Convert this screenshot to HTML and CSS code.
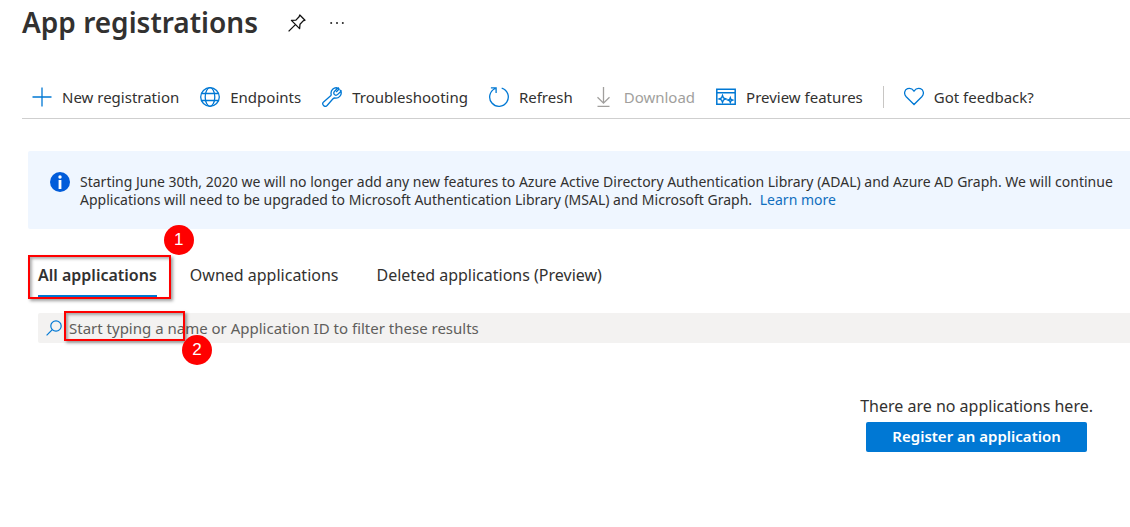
FILE: index.html
```html
<!DOCTYPE html>
<html lang="en">
<head>
<meta charset="utf-8">
<meta name="viewport" content="width=device-width, initial-scale=1">
<title>App registrations</title>
<link rel="stylesheet" href="styles.css">
</head>
<body>
<header class="page-header">
  <h1 class="page-title">App registrations</h1>
  <button class="icon-button" aria-label="Pin">
    <svg width="18" height="18" viewBox="0 0 18 18" fill="none" stroke="#111" stroke-width="1.3" stroke-linejoin="round"><path d="M11.8 1 17 6.2 15.2 6.9 12 10.2 11.600 14.600 3.400 6.400 7.900 6.100 11.1 2.8ZM7.400 10.600.6 17.400"/></svg>
  </button>
  <button class="icon-button" aria-label="More">
    <svg width="14" height="4" viewBox="0 0 14 4" fill="#222"><circle cx="1.2" cy="2" r="1"/><circle cx="7" cy="2" r="1"/><circle cx="12.8" cy="2" r="1"/></svg>
  </button>
</header>

<nav class="toolbar" aria-label="Commands">
  <button class="command"><svg class="icon" viewBox="0 0 20 20"><path d="M10 .5V19.500M.5 10H19.500"/></svg>New registration</button>
  <button class="command"><svg class="icon" viewBox="0 0 20 20"><circle cx="10" cy="10" r="9.300"/><ellipse cx="10" cy="10" rx="4.800" ry="9.300"/><path d="M1.500 6.500h17M1.500 13.500h17"/></svg>Endpoints</button>
  <button class="command"><svg class="icon" viewBox="0 0 20 20"><path d="M15.800 1A5.300 5.300 0 0 0 9.200 7.400C9.200 8.100 9 8.600 8.400 9.100L1.600 14.900A2.500 2.500 0 0 0 5.100 18.500L11 11.700C11.500 11.200 12 11 12.700 11A5.400 5.400 0 0 0 19 4.200L15.500 7.600A1.800 1.800 0 0 1 12.400 4.500Z"/><path d="M15.800 1C16.800 1.200 17.200 1.800 16.800 2.300L14.200 5M19 4.200C18.700 3.200 18 2.800 17.500 3.200"/></svg>Troubleshooting</button>
  <button class="command"><svg class="icon" viewBox="0 0 20 20"><path d="M12.700 1.100A9.300 9.300 0 1 1 6.200 1.500M1.900.8H7.100V5.900"/></svg>Refresh</button>
  <button class="command" disabled><svg class="icon" viewBox="0 0 20 20"><path d="M9.500 0V16M3.500 10.200 9.500 16.200 15.500 10.200M3.500 19.300H15.500"/></svg>Download</button>
  <button class="command"><svg class="icon" viewBox="0 0 20 20"><path stroke-width="1.500" d="M.8 2.300H19.200V17.200H.8ZM.8 5.800H19.200"/><path stroke-width="1.300" d="M6.500 8.300 7.500 10.900 10.100 11.900 7.500 12.900 6.500 15.500 5.500 12.900 2.900 11.900 5.500 10.900ZM14.300 10.600 15 12.400 16.800 13.100 15 13.800 14.300 15.600 13.600 13.800 11.800 13.100 13.600 12.400Z"/></svg>Preview features</button>
  <span class="divider"></span>
  <button class="command"><svg class="icon" viewBox="0 0 20 20"><path d="M10 17.500 2.200 9.700C-.5 6.800.4 2.800 3.500 1.700 6 .8 8.300 1.700 10 4.100 11.700 1.700 14 .8 16.500 1.700 19.600 2.800 20.500 6.800 17.800 9.700Z"/></svg>Got feedback?</button>
</nav>

<main class="content">
  <section class="notice">
    <svg class="notice-icon" viewBox="0 0 20 20"><circle cx="10" cy="10" r="10" fill="#015cda"/><circle cx="10" cy="5" r="1.700" fill="#fff"/><path d="M10 8V17" stroke="#fff" stroke-width="2.800"/></svg>
    <p class="notice-text">Starting June 30th, 2020 we will no longer add any new features to Azure Active Directory Authentication Library (ADAL) and Azure AD Graph. We will continue<br>Applications will need to be upgraded to Microsoft Authentication Library (MSAL) and Microsoft Graph. <a class="link" href="#">Learn more</a></p>
  </section>

  <div class="tabs" role="tablist">
    <div class="marked">
      <button class="tab tab-active" role="tab" aria-selected="true">All applications</button>
      <span class="callout callout-tab"><span class="step step-above">1</span></span>
    </div>
    <button class="tab" role="tab" aria-selected="false">Owned applications</button>
    <button class="tab" role="tab" aria-selected="false">Deleted applications (Preview)</button>
  </div>

  <div class="search">
    <svg class="search-icon" viewBox="0 0 16 16"><circle cx="10" cy="6" r="5.200"/><path d="M6.300 9.700.6 15.400"/></svg>
    <input class="search-input" type="text" aria-label="Filter applications" placeholder="Start typing a name or Application ID to filter these results">
    <span class="callout callout-search"><span class="step step-below">2</span></span>
  </div>

  <section class="empty">
    <p class="empty-text">There are no applications here.</p>
    <button class="primary">Register an application</button>
  </section>
</main>
</body>
</html>
```

FILE: styles.css
```css
* { box-sizing: border-box; }

body {
  margin: 0;
  overflow-x: hidden;
  background: #fff;
  color: #323130;
  font-family: "Noto Sans", "Open Sans", sans-serif;
  font-size: 15px;
}

button {
  padding: 0;
  border: 0;
  background: none;
  color: inherit;
  font: inherit;
  white-space: nowrap;
}

.page-header {
  display: flex;
  align-items: center;
  padding: 2px 22px 0;
}

.page-title {
  margin: 0 30px 0 0;
  font-size: 28px;
  font-weight: 600;
  line-height: 40px;
}

.icon-button {
  display: flex;
  margin-right: 24px;
  padding-top: 2px;
}

.toolbar {
  display: flex;
  align-items: center;
  gap: 21px;
  margin: 34px 0 0 22px;
  padding: 0 10px;
  height: 43px;
  border-bottom: 1px solid #cfcfcf;
}

.command {
  display: flex;
  align-items: center;
  gap: 10px;
  line-height: 20px;
}

.command:disabled { color: #a19f9d; }

.icon {
  flex: none;
  width: 20px;
  height: 20px;
  fill: none;
  stroke: #0078d4;
  stroke-width: 1.3;
}

.command:disabled .icon { stroke: #a19f9d; }

.divider {
  width: 1px;
  height: 22px;
  margin: 0 -1px;
  background: #c8c6c4;
}

.content { padding: 32px 0 0 28px; }

.notice {
  display: flex;
  gap: 10px;
  padding: 21px 0 20px 22px;
  overflow: hidden;
  border-radius: 2px 0 0 2px;
  background: #eff6ff;
}

.notice-icon {
  flex: none;
  width: 20px;
  height: 20px;
}

.notice-text {
  margin: 0;
  padding-top: 1px;
  font-size: 14px;
  line-height: 18px;
  white-space: nowrap;
}

.link {
  margin-left: 4px;
  color: #106ebe;
  text-decoration: none;
}

.tabs {
  display: flex;
  gap: 38px;
  margin: 32px 0 0 10px;
}

.marked {
  position: relative;
  margin-right: -5px;
}

.tab {
  height: 37px;
  padding-bottom: 6px;
  border-bottom: 3px solid transparent;
  font-size: 16px;
  line-height: 28px;
}

.tab-active {
  border-bottom-color: #0078d4;
  font-weight: 600;
}

.search {
  position: relative;
  display: flex;
  align-items: center;
  gap: 7px;
  height: 30px;
  margin: 15px 0 0 10px;
  padding-left: 8px;
  border-radius: 2px 0 0 2px;
  background: #f3f2f1;
}

.search-icon {
  flex: none;
  width: 16px;
  height: 16px;
  fill: none;
  stroke: #0078d4;
  stroke-width: 1.2;
}

.search-input {
  flex: 1;
  min-width: 0;
  padding: 0;
  border: 0;
  background: none;
  font: inherit;
}

.search-input::placeholder { color: #605e5c; opacity: 1; }

.callout {
  position: absolute;
  border: 2px solid #f00;
  box-shadow: 2px 2px 3px #00000060, inset 2px 2px 3px #00000050;
  pointer-events: none;
}

.callout-tab { inset: -6px -14px -1px -10px; }

.callout-search {
  top: -2px;
  left: 26px;
  width: 121px;
  height: 30px;
}

.step {
  position: absolute;
  display: grid;
  place-items: center;
  width: 30px;
  height: 30px;
  border-radius: 50%;
  background: #f00;
  color: #fff;
  font-family: "Liberation Sans", sans-serif;
  font-size: 17px;
}

.step-above { top: -32px; right: -25px; }
.step-below { top: 22px; right: -29px; }

.empty {
  display: flex;
  flex-direction: column;
  align-items: center;
  width: max-content;
  margin: 50px 37px 0 auto;
}

.empty-text {
  margin: 0;
  font-size: 16px;
  line-height: 26px;
}

.primary {
  margin-top: 3px;
  padding: 0 26px 2px;
  border-radius: 2px;
  background: #0078d4;
  color: #fff;
  font-weight: 600;
  line-height: 28px;
}
```
